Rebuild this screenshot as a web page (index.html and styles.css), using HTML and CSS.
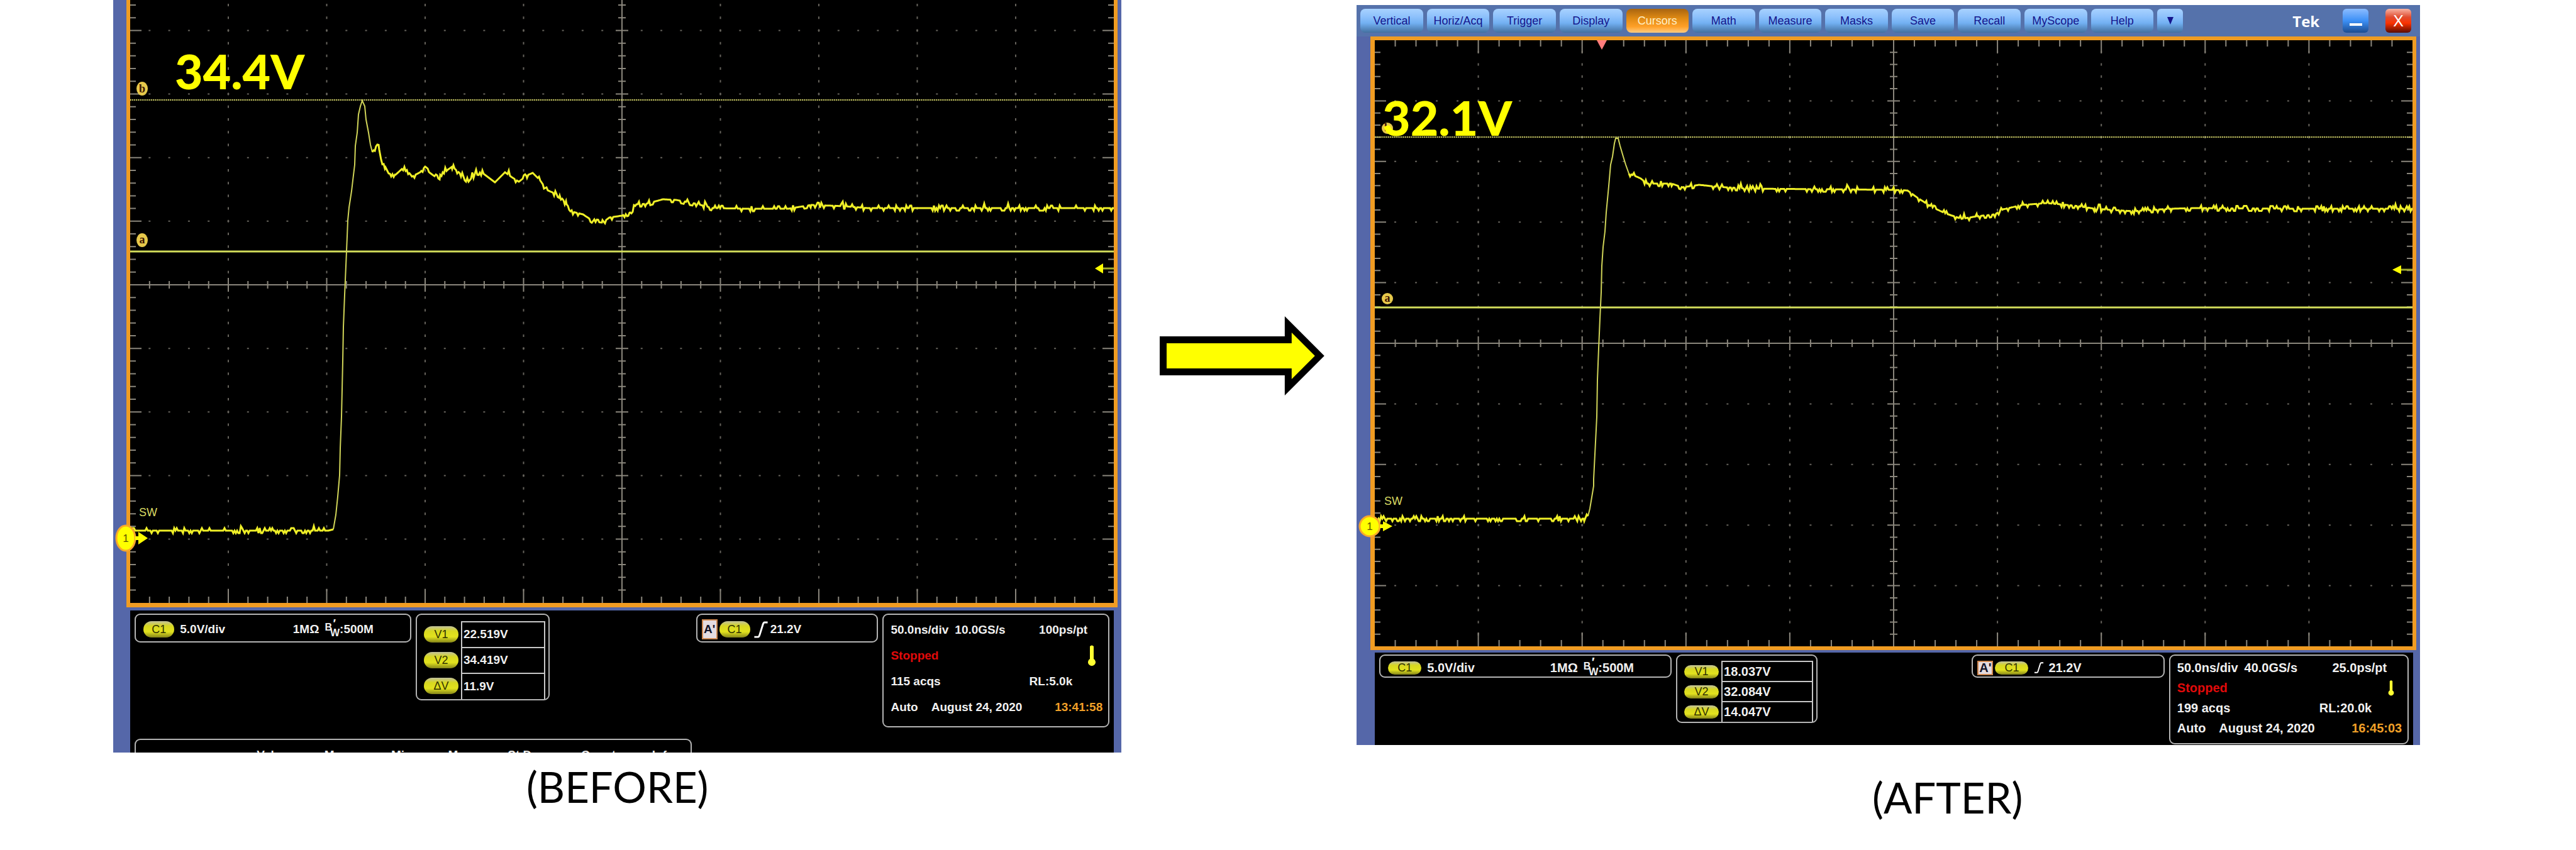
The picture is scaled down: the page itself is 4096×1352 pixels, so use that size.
FILE: index.html
```html
<!DOCTYPE html>
<html lang="en">
<head>
<meta charset="utf-8">
<title>Switch node overshoot: before and after</title>
<link rel="stylesheet" href="styles.css">
</head>
<body>
<main class="comparison">
  <figure class="capture capture-before">
    <div class="scope">
      <div class="screen">
        <svg class="plot" id="plot-before" viewBox="0 0 1564 959" role="img" aria-label="Waveform before, peak 34.4V">
          <g class="graticule"></g>
          <line class="cursor cursor-b" x1="0" y1="159" x2="1564" y2="159"/>
          <line class="cursor" x1="0" y1="400" x2="1564" y2="400"/>
          <path class="rise"/>
          <path class="trace"/>
          <g class="badge"><ellipse cx="19" cy="141" rx="9" ry="11"/><text x="19" y="147">b</text></g>
          <g class="badge"><ellipse cx="19" cy="382" rx="9" ry="11"/><text x="19" y="387">a</text></g>
          <path class="level-line" d="M1546 427H1564"/>
          <path class="level" d="M1534 427l13-8v16z"/>
          <text class="net" x="14" y="821">SW</text>
          <ellipse class="channel" cx="-7" cy="856" rx="15" ry="20"/>
          <path class="level" d="M8 853h5v-7l15 10-15 10v-7H8z"/>
          <text class="channel-number" x="-7" y="862">1</text>
          <text class="peak" x="71" y="142">34.4V</text>
        </svg>
      </div>
      <div class="status">
        <section class="box line">
          <span class="pill">C1</span><span>5.0V/div</span>
          <span class="coupling">1MΩ</span><span class="bandwidth"><sup>B</sup><sub>W</sub><i>′</i></span><span>:500M</span>
        </section>
        <section class="box cursors">
          <table>
            <tr><th scope="row"><span class="pill">V1</span></th><td>22.519V</td></tr>
            <tr><th scope="row"><span class="pill">V2</span></th><td>34.419V</td></tr>
            <tr><th scope="row"><span class="pill">ΔV</span></th><td>11.9V</td></tr>
          </table>
        </section>
        <section class="box line trigger">
          <span class="source">A'</span><span class="pill">C1</span>
          <svg class="slope" viewBox="0 0 24 28" aria-hidden="true"><path d="M1 26H7Q9 26 10 22L15 6Q16 2 18 2H23"/></svg>
          <span>21.2V</span>
        </section>
        <section class="box timebase">
          <p><span>50.0ns/div</span><span>10.0GS/s</span><span class="end rate">100ps/pt</span></p>
          <p><span class="stopped">Stopped</span><svg class="end thermo" viewBox="0 0 12 34" aria-hidden="true"><path d="M3 2Q6-1 9 2V22A6 6 0 1 1 3 22Z"/></svg></p>
          <p><span>115 acqs</span><span class="end record">RL:5.0k</span></p>
          <p><span>Auto</span><span class="date">August 24, 2020</span><time class="end clock">13:41:58</time></p>
        </section>
        <section class="box statistics">
          <span>Value</span><span>Mean</span><span>Min</span><span>Max</span><span>St Dev</span><span>Count</span><span>Info</span>
        </section>
      </div>
    </div>
    <figcaption>(BEFORE)</figcaption>
  </figure>

  <svg class="arrow" viewBox="0 0 262 126" aria-hidden="true">
    <path d="M0 32H199V0L262 63L199 126V94H0Z"/>
    <path class="arrow-fill" d="M11 43H210V26L247 63L210 100V83H11Z"/>
  </svg>

  <figure class="capture capture-after">
    <div class="scope">
      <nav class="toolbar" aria-label="Oscilloscope menu">
        <button type="button">Vertical</button>
        <button type="button">Horiz/Acq</button>
        <button type="button">Trigger</button>
        <button type="button">Display</button>
        <button type="button" class="active">Cursors</button>
        <button type="button">Math</button>
        <button type="button">Measure</button>
        <button type="button">Masks</button>
        <button type="button">Save</button>
        <button type="button">Recall</button>
        <button type="button">MyScope</button>
        <button type="button">Help</button>
        <button type="button" class="small" aria-label="More menus"><svg viewBox="0 0 12 14" aria-hidden="true"><path d="M1 1H11L6 13Z"/></svg></button>
        <strong>Tek</strong>
        <button type="button" class="small minimise" aria-label="Minimise"><svg viewBox="0 0 20 20" aria-hidden="true"><path d="M0 14H20V18H0Z"/></svg></button>
        <button type="button" class="small close">X</button>
      </nav>
      <div class="screen">
        <svg class="plot" id="plot-after" viewBox="0 0 1650 964" role="img" aria-label="Waveform after, peak 32.1V">
          <g class="graticule"></g>
          <line class="cursor cursor-b" x1="0" y1="154" x2="1650" y2="154"/>
          <line class="cursor" x1="0" y1="425" x2="1650" y2="425"/>
          <path class="rise"/>
          <path class="trace"/>
          <path class="trigger-point" d="M353 0H369L361 15Z"/>
          <g class="badge"><ellipse cx="20" cy="140" rx="9" ry="9"/><text x="20" y="145">b</text></g>
          <g class="badge"><ellipse cx="20" cy="411" rx="9" ry="9"/><text x="20" y="416">a</text></g>
          <path class="level-line" d="M1630 365H1650"/>
          <path class="level" d="M1618 365l14-7v14z"/>
          <text class="net" x="15" y="739">SW</text>
          <ellipse class="channel" cx="-8" cy="773" rx="16" ry="16"/>
          <path class="level" d="M8 770h5v-5l15 8-15 8v-5H8z"/>
          <text class="channel-number" x="-8" y="779">1</text>
          <text class="peak" x="12" y="152">32.1V</text>
        </svg>
      </div>
      <div class="status">
        <section class="box line">
          <span class="pill">C1</span><span>5.0V/div</span>
          <span class="coupling">1MΩ</span><span class="bandwidth"><sup>B</sup><sub>W</sub><i>′</i></span><span>:500M</span>
        </section>
        <section class="box cursors">
          <table>
            <tr><th scope="row"><span class="pill">V1</span></th><td>18.037V</td></tr>
            <tr><th scope="row"><span class="pill">V2</span></th><td>32.084V</td></tr>
            <tr><th scope="row"><span class="pill">ΔV</span></th><td>14.047V</td></tr>
          </table>
        </section>
        <section class="box line trigger">
          <span class="source">A'</span><span class="pill">C1</span>
          <svg class="slope" viewBox="0 0 24 28" aria-hidden="true"><path d="M1 26H7Q9 26 10 22L15 6Q16 2 18 2H23"/></svg>
          <span>21.2V</span>
        </section>
        <section class="box timebase">
          <p><span>50.0ns/div</span><span>40.0GS/s</span><span class="end rate">25.0ps/pt</span></p>
          <p><span class="stopped">Stopped</span><svg class="end thermo" viewBox="0 0 12 34" aria-hidden="true"><path d="M3 2Q6-1 9 2V22A6 6 0 1 1 3 22Z"/></svg></p>
          <p><span>199 acqs</span><span class="end record">RL:20.0k</span></p>
          <p><span>Auto</span><span class="date">August 24, 2020</span><time class="end clock">16:45:03</time></p>
        </section>
      </div>
    </div>
    <figcaption>(AFTER)</figcaption>
  </figure>
</main>
<script src="plots.js"></script>
</body>
</html>
```

FILE: styles.css
```css
* { box-sizing: border-box; }

body {
  margin: 0;
  background: #fff;
  color: #000;
  font-family: "Liberation Sans", Arial, sans-serif;
}

.comparison {
  display: grid;
  grid-template-columns: 1603fr 374fr 1691fr;
  align-items: start;
  padding: 0 6.05% 0 4.4%;
  overflow: hidden;
}

.capture {
  margin: 0;
  min-width: 0;
  --row: 41px;
  --text: 19px;
  --line-box: 46px;
  --pill: 49px;
  --pill-height: 26px;
  --top: 10px;
}

.capture-after {
  padding-top: 8px;
  --row: 32px;
  --text: 20px;
  --line-box: 37px;
  --pill: 53px;
  --pill-height: 21px;
  --top: 8px;
}

.scope {
  background: #5567a9;
  padding: 0 6px 0 21px;
}

.capture-after .scope { padding-left: 22px; }

.screen {
  border: 6px solid #f09c22;
  border-top-width: 0;
  border-bottom-width: 7px;
  background: #000;
}

.capture-after .screen { border-width: 6px 6px 6px 7px; }

.plot {
  display: block;
  width: 100%;
  height: auto;
  overflow: visible;
}

.graticule path { fill: none; stroke: #8a867c; stroke-width: 2; }
.graticule .dots { stroke: #66635c; }
.cursor { stroke: #d2dc5a; stroke-width: 3; }
.cursor-b { stroke: #c8c864; stroke-width: 2; stroke-dasharray: 2 1; }
.trace { fill: none; stroke: #f0f028; stroke-width: 3; }
.rise { fill: none; stroke: #d0d458; stroke-width: 2; }
.level { fill: #ff0; }
.level-line { stroke: #a0aa30; stroke-width: 3; }
.trigger-point { fill: #ff7c7c; }
.badge ellipse { fill: #e6c84b; }
.badge text { fill: #3c1400; font: bold 18px "Liberation Serif", serif; text-anchor: middle; }
.channel { fill: #ff0; stroke: #f7a82a; stroke-width: 3; }
.channel-number { fill: #5a5000; font: 17px "Liberation Sans", sans-serif; text-anchor: middle; }
.net { fill: #dcdc64; font: 18px "Liberation Sans Narrow", "Liberation Sans", sans-serif; }
.peak { fill: #ff0; font: 900 77px Lato, sans-serif; }

.toolbar {
  display: flex;
  align-items: center;
  gap: 6px;
  height: 50px;
  margin-left: -22px;
  margin-right: -6px;
  padding: 0 14px 0 6px;
  background: #5572ab;
}

.toolbar button {
  flex: 0 0 5.96%;
  height: 38px;
  padding: 0;
  border: 0;
  border-radius: 8px;
  background: linear-gradient(#a8d2ff, #8cc0fb 35%, #72b0f2 60%, #43709f);
  color: #14148c;
  font: 18px "Liberation Sans", sans-serif;
}

.toolbar .active {
  background: linear-gradient(#a86410, #e08a14 40%, #ffa028 75%, #ffcc80);
  color: #fff0c8;
}

.toolbar .small { flex-basis: 41px; border-radius: 6px; }
.toolbar .small svg { display: block; width: 12px; height: 14px; margin: auto; }
.toolbar .small path { fill: #14148c; }
.toolbar strong { margin-left: auto; margin-right: 31px; color: #fff; font: bold 24px "Open Sans", sans-serif; }
.toolbar .minimise { margin-right: 21px; background: linear-gradient(#8cbcff, #3c90f6 50%, #1c4c90); }
.toolbar .minimise svg { width: 20px; height: 20px; }
.toolbar .minimise path { fill: #fff; }
.toolbar .close { background: linear-gradient(#f8b4a4, #e04c30 35%, #fa3200 60%, #5a0c00); color: #fff; font-size: 25px; }

.status {
  display: grid;
  grid-template-columns: 440fr 213fr 219fr 290fr 361fr;
  column-gap: 7px;
  align-items: start;
  margin: 5px 6px 0;
  padding: 5px 7px 0;
  background: #000;
  color: #f0f0f0;
  font-size: var(--text);
  font-weight: bold;
}

.capture-after .status { margin: 4px 5px 0 7px; padding-top: 3px; padding-bottom: 1px; }

.box {
  min-width: 0;
  border: 2px solid #b4b4b4;
  border-radius: 9px;
  white-space: nowrap;
}

.line {
  display: flex;
  align-items: center;
  height: var(--line-box);
  padding: 5px 12px 0;
}

.pill {
  display: block;
  flex: none;
  width: var(--pill);
  height: var(--pill-height);
  margin-right: 9px;
  border-radius: 13px;
  background: linear-gradient(#c0c09c, #d8d820 30%, #e2e21e 65%, #84841a);
  color: #323200;
  font-size: 18px;
  font-weight: normal;
  line-height: var(--pill-height);
  text-align: center;
}

.coupling { margin-left: auto; margin-right: 9px; }
.line:first-child { padding-right: 58px; }
.bandwidth { position: relative; }
.bandwidth sup, .bandwidth sub { font-size: 16px; line-height: 0; vertical-align: 4px; }
.bandwidth sub { vertical-align: -5px; margin-left: -3px; }
.bandwidth i { position: absolute; left: 12px; top: -9px; }

.cursors { padding: var(--top) 5px 0 11px; }
.cursors table { width: 100%; border-collapse: collapse; }
.cursors th { width: 60px; padding: 0; }
.cursors .pill { width: 55px; margin: 0; }
.cursors td {
  height: var(--row);
  padding: 0 2px;
  border: 2px solid #c8c8c8;
  border-bottom: 0;
}

.trigger { grid-column: 4; padding-left: 7px; }
.trigger .pill { margin-right: 5px; }
.source {
  width: 25px;
  margin-right: 3px;
  border: 2px solid #d08850;
  background: #e6dce0;
  color: #141428;
  line-height: calc(var(--line-box) - 18px);
  text-align: center;
}
.slope { flex: none; width: 24px; height: calc(var(--line-box) - 19px); margin-right: 3px; }
.slope path { fill: none; stroke: #fff; stroke-width: 3; }

.timebase { grid-column: 5; padding: 4px 0 9px 11px; }
.capture-after .timebase { padding: 3px 0 8px 11px; }
.timebase p { display: flex; align-items: center; gap: 10px; height: var(--row); margin: 0; }
.end { margin-left: auto; }
.rate { padding-right: 33px; }
.thermo { width: 12px; height: calc(var(--row) - 7px); margin-right: 20px; }
.thermo path { fill: #ffff32; }
.record { padding-right: 57px; }
.stopped { color: #e10a0a; }
.date { margin-left: 11px; }
.clock { padding-right: 9px; color: #f0a028; }

.statistics {
  grid-column: 1 / 4;
  display: flex;
  justify-content: space-between;
  height: 22px;
  margin-top: 18px;
  padding: 14px 26px 0 192px;
  border-bottom: 0;
  border-radius: 9px 9px 0 0;
  line-height: 20px;
  overflow: hidden;
}

.arrow {
  width: 70%;
  margin: 503px 0 0 61px;
}
.arrow-fill { fill: #ff0; }

figcaption {
  margin-top: 12px;
  font: 67px/84px Lato, sans-serif;
  text-align: center;
}

.capture-after figcaption { margin-top: 41px; padding-left: 188px; }
```

FILE: plots.js
```js
const SVG = "http://www.w3.org/2000/svg";

const plots = {
  "plot-before": {
    width: 1564, height: 959, cx: 782, cy: 453, dx: 156.5, dy: 101.15,
    noise: 4, base: [0, 844, 315, 844, 323, 842],
    rise: [323,842, 327,819, 330,790, 333,756, 334,713, 336,663, 338,575, 339,520, 341,469,
      343,423, 345,376, 346,351, 348,330, 352,304, 354,287, 357,262, 358,232, 361,211,
      363,182, 366,169, 369,160, 373,169, 375,190, 379,211, 382,230, 385,242],
    settle: [385,242, 389,236, 396,238, 399,254, 406,266, 411,276, 422,278, 434,267, 446,282,
      461,274, 469,265, 482,275, 493,282, 505,270, 512,265, 526,277, 538,289, 550,274,
      560,275, 580,290, 596,274, 607,282, 618,289, 631,279, 640,275, 652,287, 662,302,
      683,311, 694,325, 704,337, 720,341, 738,353, 751,354, 762,346, 782,343, 795,338,
      805,325, 821,324, 847,317, 868,318, 900,324, 926,331, 984,332, 1046,332, 1083,326,
      1136,328, 1172,331, 1564,331]
  },
  "plot-after": {
    width: 1650, height: 964, cx: 825, cy: 482, dx: 165.1, dy: 96.4,
    noise: 4, base: [0, 761, 333, 761, 339, 757],
    rise: [339,757, 342,745, 345,727, 348,709, 348,698, 353,599, 354,540, 356,490, 358,443,
      360,401, 361,359, 363,329, 366,304, 368,274, 372,232, 375,198, 378,185, 381,164,
      383,156, 387,156, 390,168, 395,185, 399,198, 404,212],
    settle: [404,212, 412,215, 423,220, 433,228, 472,228, 489,234, 516,230, 544,233, 593,236,
      823,238, 847,239, 865,252, 887,266, 909,276, 933,284, 958,280, 986,277, 999,269,
      1030,262, 1068,259, 1112,263, 1145,268, 1205,272, 1266,268, 1304,267, 1469,268, 1650,268]
  }
};

function segments(list) {
  return list.map(([x1, y1, x2, y2]) => `M${x1} ${y1}L${x2} ${y2}`).join("");
}

function graticule(plot) {
  const { width, height, cx, cy, dx, dy } = plot;
  const ticks = [[0, cy, width, cy], [cx, 0, cx, height]];
  const dots = [];
  for (let i = -24; i <= 24; i++) {
    const x = cx + i * dx / 5;
    const major = i % 5 === 0;
    const reach = major ? 11 : 6;
    ticks.push([x, cy - reach, x, cy + reach]);
    ticks.push([x, height - (major ? 22 : 10), x, height]);
    if (plot === plots["plot-after"]) ticks.push([x, 0, x, major ? 20 : 10]);
    for (let j = -4; j <= 4; j++) {
      const y = cy + j * dy;
      if (j !== 0 && i !== 0) dots.push([x - 1.5, y, x + 1.5, y]);
    }
  }
  for (let j = -24; j <= 24; j++) {
    const y = cy + j * dy / 5;
    if (y < 0) continue;
    const major = j % 5 === 0;
    ticks.push([0, y, major ? 18 : 9, y]);
    ticks.push([width - (major ? 18 : 9), y, width, y]);
    ticks.push([cx - (major ? 10 : 6), y, cx + (major ? 10 : 6), y]);
    for (let i = -4; i <= 4; i++) {
      const x = cx + i * dx;
      if (i !== 0 && j !== 0) dots.push([x, y - 2, x, y + 2]);
    }
  }
  return { ticks: segments(ticks), dots: segments(dots) };
}

let seed = 7;
function random() {
  seed = (seed * 16807) % 2147483647;
  return seed / 2147483647;
}

// Samples the polyline every 2 px and adds stepped quantisation noise.
function noisy(points, amplitude) {
  let path = "";
  for (let k = 0; k + 3 < points.length; k += 2) {
    const [x1, y1, x2, y2] = points.slice(k, k + 4);
    for (let x = x1; x < x2; x += 2) {
      const y = y1 + (y2 - y1) * (x - x1) / (x2 - x1);
      const r = random();
      let level = 0;
      if (r < 0.2) level = amplitude;
      else if (r < 0.32) level = -amplitude;
      else if (r > 0.985) level = -amplitude * 1.8;
      path += `${path ? "L" : "M"}${x} ${(y + level).toFixed(1)}`;
    }
  }
  return path + `L${points.at(-2)} ${points.at(-1)}`;
}

for (const [id, plot] of Object.entries(plots)) {
  const svg = document.getElementById(id);
  const group = svg.querySelector(".graticule");
  const lines = graticule(plot);
  for (const kind of ["dots", "ticks"]) {
    const path = document.createElementNS(SVG, "path");
    path.setAttribute("class", kind);
    path.setAttribute("d", lines[kind]);
    group.append(path);
  }
  svg.querySelector(".rise").setAttribute("d", "M" + plot.rise.join(" "));
  svg.querySelector(".trace").setAttribute("d",
    noisy(plot.base, plot.noise) + noisy(plot.settle, plot.noise));
}
```
